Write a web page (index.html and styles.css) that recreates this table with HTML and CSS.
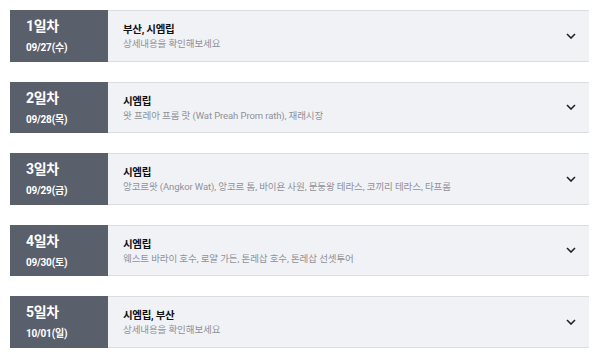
FILE: index.html
```html
<!DOCTYPE html>
<html lang="ko">
<head>
<meta charset="utf-8">
<link rel="stylesheet" href="styles.css">
</head>
<body>
<div class="list">
  <div class="day">
    <div class="badge"><div class="num">1일차</div><div class="date">09/27(수)</div></div>
    <div class="info"><div class="title">부산, 시엠립</div><div class="desc">상세내용을 확인해보세요</div></div>
    <svg class="chev" width="10" height="6" viewBox="0 0 10 6"><path d="M1 1l4 4 4-4" fill="none" stroke="#222" stroke-width="1.6"/></svg>
  </div>
  <div class="day">
    <div class="badge"><div class="num">2일차</div><div class="date">09/28(목)</div></div>
    <div class="info"><div class="title">시엠립</div><div class="desc">왓 프레아 프롬 랏 (Wat Preah Prom rath), 재래시장</div></div>
    <svg class="chev" width="10" height="6" viewBox="0 0 10 6"><path d="M1 1l4 4 4-4" fill="none" stroke="#222" stroke-width="1.6"/></svg>
  </div>
  <div class="day">
    <div class="badge"><div class="num">3일차</div><div class="date">09/29(금)</div></div>
    <div class="info"><div class="title">시엠립</div><div class="desc">앙코르왓 (Angkor Wat), 앙코르 톰, 바이욘 사원, 문둥왕 테라스, 코끼리 테라스, 타프롬</div></div>
    <svg class="chev" width="10" height="6" viewBox="0 0 10 6"><path d="M1 1l4 4 4-4" fill="none" stroke="#222" stroke-width="1.6"/></svg>
  </div>
  <div class="day">
    <div class="badge"><div class="num">4일차</div><div class="date">09/30(토)</div></div>
    <div class="info"><div class="title">시엠립</div><div class="desc">웨스트 바라이 호수, 로얄 가든, 톤레삽 호수, 톤레삽 선셋투어</div></div>
    <svg class="chev" width="10" height="6" viewBox="0 0 10 6"><path d="M1 1l4 4 4-4" fill="none" stroke="#222" stroke-width="1.6"/></svg>
  </div>
  <div class="day">
    <div class="badge"><div class="num">5일차</div><div class="date">10/01(일)</div></div>
    <div class="info"><div class="title">시엠립, 부산</div><div class="desc">상세내용을 확인해보세요</div></div>
    <svg class="chev" width="10" height="6" viewBox="0 0 10 6"><path d="M1 1l4 4 4-4" fill="none" stroke="#222" stroke-width="1.6"/></svg>
  </div>
</div>
</body>
</html>
```
FILE: styles.css
```css
html, body { margin: 0; padding: 0; background: #fff; }
body { font-family: Roboto, "Noto Sans CJK KR", sans-serif; }
.list { display: flex; flex-direction: column; gap: 20px; padding: 10px 0 0 10px; width: 579px; }
.day {
  display: flex; align-items: center; height: 51.5px; box-sizing: border-box;
  background: #f1f2f6; border-top: 1px solid #dcdde0; border-bottom: 1px solid #dcdde0;
}
.badge {
  align-self: stretch; margin: -1px 0; width: 98px; box-sizing: border-box;
  background: #5a5f6c; color: #fff; padding: 6px 0 0 16px;
}
.num { font-size: 14px; font-weight: 700; line-height: 21px; letter-spacing: -0.3px; }
.date { font-size: 10px; font-weight: 700; line-height: 15px; margin-top: 3px; letter-spacing: -0.2px; }
.info { flex: 1; padding: 2px 0 0 15px; }
.title { font-size: 10.5px; font-weight: 700; color: #111; line-height: 15px; letter-spacing: -0.3px; }
.desc { font-size: 9.5px; color: #8f9196; line-height: 14px; letter-spacing: -0.1px; }
.chev { margin-right: 13px; }
```
